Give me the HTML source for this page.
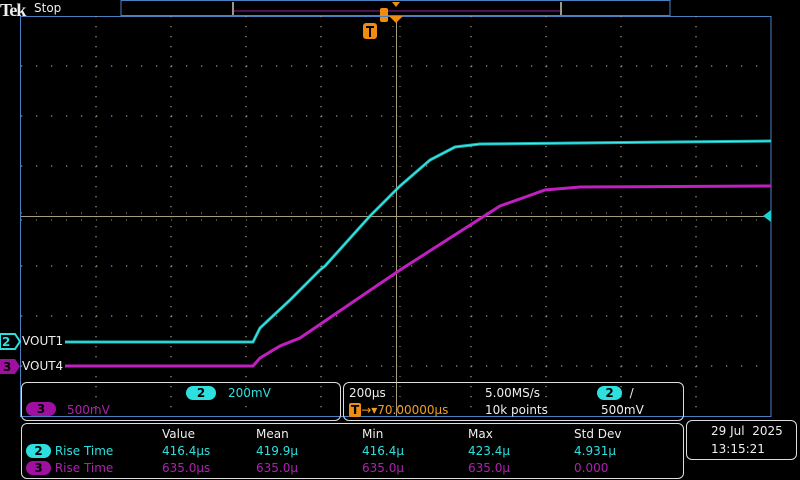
<!DOCTYPE html><html><head><style>
body{margin:0;width:800px;height:480px;background:#000;overflow:hidden;position:relative;font-family:"DejaVu Sans","Liberation Sans",sans-serif;}
.t{position:absolute;font-size:12px;white-space:nowrap;line-height:14px}
.box{position:absolute;border:1px solid #ddd;border-radius:6px;box-sizing:border-box}
.pill{display:inline-block;border-radius:8px;color:#000;font-weight:bold;text-align:center;width:30px;height:14px;line-height:14px;font-size:12px}
.c{color:#2de0e0}.m{color:#b020b0}.w{color:#eee}.o{color:#f0a020}
</style></head><body>
<svg width="800" height="480" style="position:absolute;left:0;top:0">
<rect x="121" y="0.5" width="549" height="15" fill="none" stroke="#4a7fc0"/>
<line x1="233" y1="11" x2="561" y2="11" stroke="#a020a0"/>
<path d="M233 2V15M561 2V15" stroke="#998" stroke-width="2"/>
<rect x="380" y="8" width="8" height="14" rx="2" fill="#f08c10"/>
<path d="M392 2h8l-4 5z" fill="#f08c10"/>
<rect x="20.5" y="16.5" width="750.5" height="400" fill="none" stroke="#4a7fc0"/>
<g stroke="#a09478" stroke-width="1.3" stroke-dasharray="1.3 8.7" >
<path d="M96 16V416M171 16V416M246 16V416M321 16V416M471 16V416M546 16V416M621 16V416M696 16V416"/>
</g>
<g stroke="#a09478" stroke-width="1.3" stroke-dasharray="1.3 13.7" >
<path d="M21 66H771M21 116H771M21 166H771M21 266H771M21 316H771M21 366H771"/>
</g>
<path d="M21 216.5H771M396.5 20V416" stroke="#a89c7c" stroke-width="1"/>
<g stroke="#a89c7c" stroke-dasharray="1 9"><path d="M393 16V416M400 16V416" /></g>
<g stroke="#a89c7c" stroke-dasharray="1 14"><path d="M21 213H771M21 220H771"/></g>
<path d="M389 16h14l-7 7z" fill="#f08c10"/>
<rect x="363" y="23" width="14" height="16" rx="3" fill="#f08c10"/>
<path d="M366 27h8M370 27v10" stroke="#000" stroke-width="2"/>
<path d="M65 342L253 342L260 328L290 300L320 270L325 266L370 216L400 186L430 160L455 147L480 144L771 141" fill="none" stroke="#20c8c8" stroke-width="3" opacity=".9"/>
<path d="M65 342L253 342L260 328L290 300L320 270L325 266L370 216L400 186L430 160L455 147L480 144L771 141" fill="none" stroke="#40f0f0" stroke-width="1"/>
<path d="M65 366L253 366L260 358L280 346L300 338L400 270L500 206L545 190L580 187L771 186" fill="none" stroke="#c020c0" stroke-width="3"/>
<path d="M763 216l8-6v12z" fill="#20d0d0"/>
<path d="M0 334h15l5 7.5-5 7.5H0z" fill="#000" stroke="#2de0e0" stroke-width="2"/>
<path d="M0 359h15l5 7.5-5 7.5H0z" fill="#a010a0"/>
</svg>
<div class="t w" style="left:0;top:0;font:bold 18px 'Liberation Serif',serif;letter-spacing:-1px">Tek</div>
<div class="t w" style="left:34px;top:1px">Stop</div>
<div class="t c" style="left:2px;top:335px;font-weight:bold">2</div>
<div class="t w" style="left:3px;top:360px;font-weight:bold;color:#000">3</div>
<div class="t w" style="left:22px;top:334px">VOUT1</div>
<div class="t w" style="left:22px;top:359px">VOUT4</div>
<div class="box" style="left:21px;top:382px;width:320px;height:39px"></div>
<div class="t" style="left:186px;top:386px"><span class="pill" style="background:#2de0e0">2</span></div>
<div class="t c" style="left:228px;top:386px">200mV</div>
<div class="t" style="left:26px;top:402px"><span class="pill" style="background:#a010a0">3</span></div>
<div class="t m" style="left:67px;top:403px">500mV</div>
<div class="box" style="left:343px;top:382px;width:341px;height:39px"></div>
<div class="t w" style="left:349px;top:386px">200µs</div>
<div class="t w" style="left:485px;top:386px">5.00MS/s</div>
<div class="t" style="left:597px;top:386px"><span class="pill" style="background:#2de0e0;width:25px">2</span> <span class="w">&nbsp;/</span></div>
<div class="t o" style="left:349px;top:403px"><span style="background:#f08c10;color:#000;font-weight:bold;padding:0 2px;border-radius:2px">T</span>→▾70.00000µs</div>
<div class="t w" style="left:485px;top:403px">10k points</div>
<div class="t w" style="left:601px;top:403px">500mV</div>
<div class="box" style="left:21px;top:423px;width:663px;height:56px"></div>
<div class="t w" style="left:162px;top:427px">Value</div>
<div class="t w" style="left:256px;top:427px">Mean</div>
<div class="t w" style="left:362px;top:427px">Min</div>
<div class="t w" style="left:468px;top:427px">Max</div>
<div class="t w" style="left:574px;top:427px">Std Dev</div>
<div class="t" style="left:26px;top:444px"><span class="pill" style="background:#2de0e0;width:25px">2</span> <span class="c">Rise Time</span></div>
<div class="t c" style="left:162px;top:444px">416.4µs</div>
<div class="t c" style="left:256px;top:444px">419.9µ</div>
<div class="t c" style="left:362px;top:444px">416.4µ</div>
<div class="t c" style="left:468px;top:444px">423.4µ</div>
<div class="t c" style="left:574px;top:444px">4.931µ</div>
<div class="t" style="left:26px;top:461px"><span class="pill" style="background:#a010a0;width:25px">3</span> <span class="m">Rise Time</span></div>
<div class="t m" style="left:162px;top:461px">635.0µs</div>
<div class="t m" style="left:256px;top:461px">635.0µ</div>
<div class="t m" style="left:362px;top:461px">635.0µ</div>
<div class="t m" style="left:468px;top:461px">635.0µ</div>
<div class="t m" style="left:574px;top:461px">0.000</div>
<div class="box" style="left:686px;top:420px;width:111px;height:40px"></div>
<div class="t w" style="left:711px;top:424px">29 Jul &nbsp;2025</div>
<div class="t w" style="left:711px;top:442px">13:15:21</div>
</body></html>
